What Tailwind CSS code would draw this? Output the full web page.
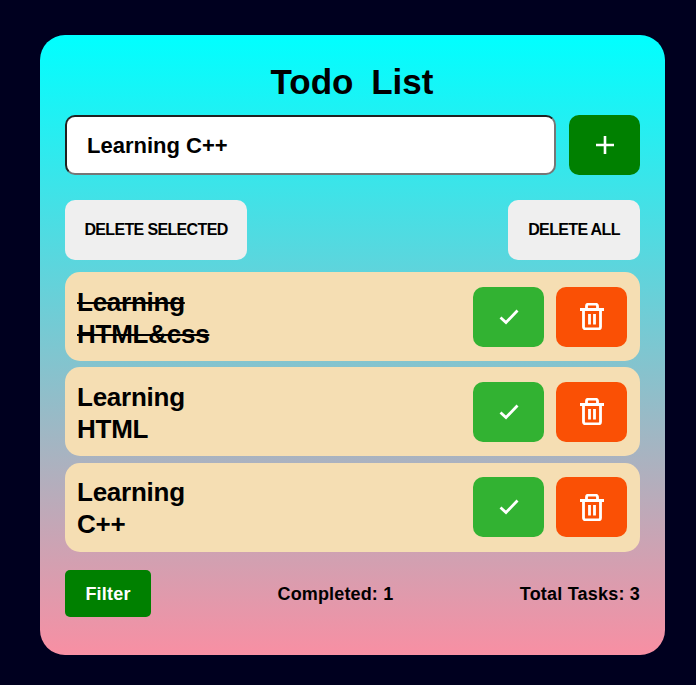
<!DOCTYPE html>
<html lang="en">
<head>
    <meta charset="UTF-8">
    <meta name="viewport" content="width=device-width, initial-scale=1.0">
    <title>Todo List</title>
    <script src="https://cdn.jsdelivr.net/npm/@tailwindcss/browser@4"></script>
</head>
<body class="min-h-screen bg-[#00001f] font-['Liberation_Sans',sans-serif] font-bold text-black">
    <div class="pt-[35px] pl-[40px]">
        <div class="w-[625px] h-[620px] rounded-[25px] bg-[linear-gradient(to_bottom,#00ffff,#f88fa3)] px-[25px]">
            <h1 class="pt-[25px] pr-[1px] h-[80px] text-center text-[35px] leading-[44px] font-bold [word-spacing:8px]">Todo List</h1>

            <div class="flex justify-between">
                <input value="Learning C++" class="w-[491px] h-[60px] rounded-[10px] bg-white border-2 border-t-[#212121] border-l-[#212121] border-r-[#767676] border-b-[#767676] pl-[20px] pt-[1px] text-[22px] font-bold text-black outline-none">
                <button class="w-[71px] h-[60px] rounded-[10px] bg-[#008000] flex items-center justify-center">
                    <svg width="20" height="20" viewBox="0 0 20 20" fill="none" stroke="white" stroke-width="2.6"><path d="M10 1v18M1 10h18"/></svg>
                </button>
            </div>

            <div class="flex justify-between mt-[25px] mb-[12px]">
                <button class="w-[182px] h-[60px] rounded-[10px] bg-[#efefef] text-[16px] tracking-[-0.65px] font-bold">DELETE SELECTED</button>
                <button class="w-[132px] h-[60px] rounded-[10px] bg-[#efefef] text-[16px] tracking-[-0.65px] font-bold">DELETE ALL</button>
            </div>

            <div class="flex flex-col gap-[6.4px]">
                <div class="h-[89px] rounded-[15px] bg-[#f5deb3] flex items-center justify-between pl-[12px] pr-[13px]">
                    <p class="w-[140px] pt-[2px] text-[26px] tracking-[-0.25px] leading-[32px] line-through">Learning HTML&amp;css</p>
                    <div class="flex gap-[12px]">
                        <button class="w-[71px] h-[60px] rounded-[10px] bg-[#32b232] flex items-center justify-center">
                            <svg width="20" height="16" viewBox="0 0 20 16" fill="none" stroke="white" stroke-width="2.8"><path d="M1.5 8.5l5.5 5L18.5 1.5"/></svg>
                        </button>
                        <button class="w-[71px] h-[60px] rounded-[10px] bg-[#fa5005] flex items-center justify-center">
                            <svg width="24" height="27" viewBox="0 0 24 27" fill="none" stroke="white" stroke-width="2.8" stroke-linejoin="round"><path d="M0 6.5h24M6.5 6V3a1.8 1.8 0 0 1 1.8-1.8h7.4A1.8 1.8 0 0 1 17.500 3V6M3.500 6.500V24a1.800 1.800 0 0 0 1.800 1.800h13.400a1.800 1.800 0 0 0 1.800-1.800V6.500M9.500 11v10.500M14.500 11v10.500"/></svg>
                        </button>
                    </div>
                </div>
                <div class="h-[89px] rounded-[15px] bg-[#f5deb3] flex items-center justify-between pl-[12px] pr-[13px]">
                    <p class="w-[140px] pt-[2px] text-[26px] tracking-[-0.25px] leading-[32px]">Learning HTML</p>
                    <div class="flex gap-[12px]">
                        <button class="w-[71px] h-[60px] rounded-[10px] bg-[#32b232] flex items-center justify-center">
                            <svg width="20" height="16" viewBox="0 0 20 16" fill="none" stroke="white" stroke-width="2.8"><path d="M1.5 8.5l5.5 5L18.5 1.5"/></svg>
                        </button>
                        <button class="w-[71px] h-[60px] rounded-[10px] bg-[#fa5005] flex items-center justify-center">
                            <svg width="24" height="27" viewBox="0 0 24 27" fill="none" stroke="white" stroke-width="2.8" stroke-linejoin="round"><path d="M0 6.5h24M6.5 6V3a1.8 1.8 0 0 1 1.8-1.8h7.4A1.8 1.8 0 0 1 17.500 3V6M3.500 6.500V24a1.800 1.800 0 0 0 1.800 1.800h13.400a1.800 1.800 0 0 0 1.800-1.800V6.500M9.500 11v10.500M14.500 11v10.500"/></svg>
                        </button>
                    </div>
                </div>
                <div class="h-[89px] rounded-[15px] bg-[#f5deb3] flex items-center justify-between pl-[12px] pr-[13px]">
                    <p class="w-[140px] pt-[2px] text-[26px] tracking-[-0.25px] leading-[32px]">Learning C++</p>
                    <div class="flex gap-[12px]">
                        <button class="w-[71px] h-[60px] rounded-[10px] bg-[#32b232] flex items-center justify-center">
                            <svg width="20" height="16" viewBox="0 0 20 16" fill="none" stroke="white" stroke-width="2.8"><path d="M1.5 8.5l5.5 5L18.5 1.5"/></svg>
                        </button>
                        <button class="w-[71px] h-[60px] rounded-[10px] bg-[#fa5005] flex items-center justify-center">
                            <svg width="24" height="27" viewBox="0 0 24 27" fill="none" stroke="white" stroke-width="2.8" stroke-linejoin="round"><path d="M0 6.5h24M6.5 6V3a1.8 1.8 0 0 1 1.8-1.8h7.4A1.8 1.8 0 0 1 17.500 3V6M3.500 6.500V24a1.800 1.800 0 0 0 1.800 1.800h13.400a1.800 1.800 0 0 0 1.800-1.800V6.500M9.500 11v10.500M14.500 11v10.500"/></svg>
                        </button>
                    </div>
                </div>
            </div>

            <div class="mt-[18px] flex items-center justify-between">
                <button class="w-[86px] h-[47px] pt-[2px] rounded-[5px] bg-[#008000] text-white text-[18px] tracking-[0.2px] font-bold">Filter</button>
                <span class="mt-[3px] text-[18px] tracking-[0.15px]">Completed: 1</span>
                <span class="mt-[3px] text-[18px] tracking-[0.2px]">Total Tasks: 3</span>
            </div>
        </div>
    </div>
</body>
</html>
